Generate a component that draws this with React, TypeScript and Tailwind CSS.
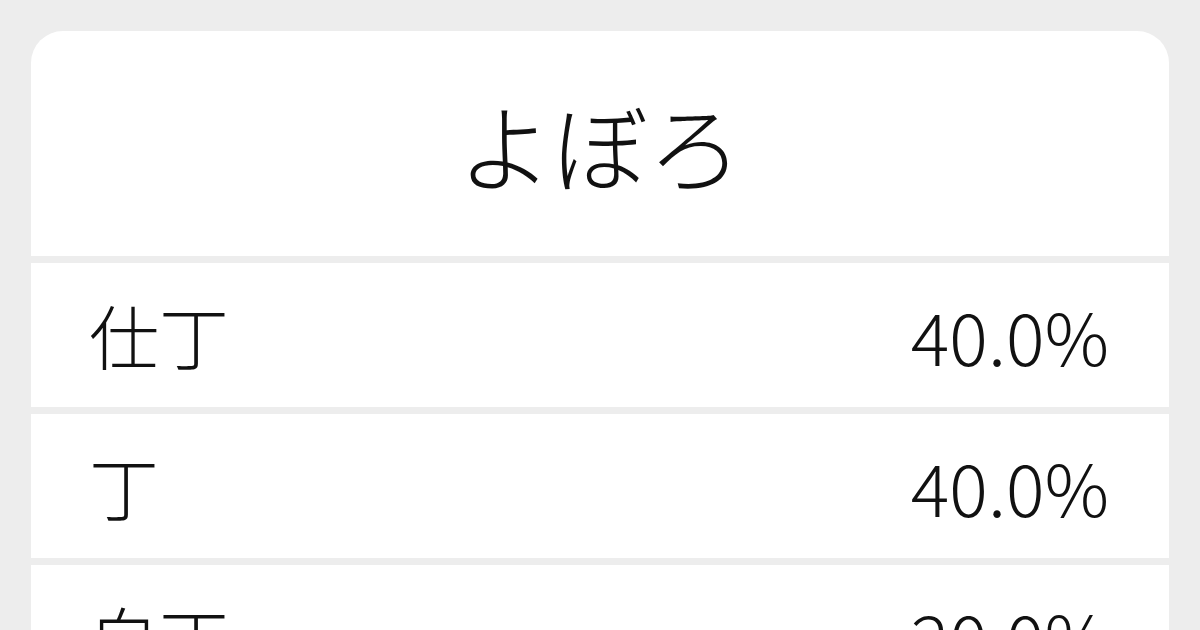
import React from 'react';

const rows = [
  { word: '仕丁', pct: '40.0%' },
  { word: '丁', pct: '40.0%' },
  { word: '白丁', pct: '20.0%' },
];

const App: React.FC = () => {
  return (
    <div
      className="w-[1200px] h-[630px] overflow-hidden bg-[#ededed] pt-[31px] px-[31px] text-[#111111]"
      style={{ fontFamily: '"Noto Sans CJK JP", "Noto Sans", sans-serif' }}
    >
      <div className="flex flex-col gap-[7px]">
        {/* Title */}
        <div className="h-[225px] bg-white rounded-t-[32px] flex items-center justify-center">
          <h1 className="text-[95px] font-light leading-none">よぼろ</h1>
        </div>

        {rows.map((r) => (
          <div key={r.word} className="h-[144px] bg-white flex items-center justify-between pl-[58px] pr-[60px]">
            <span className="text-[70px] font-light leading-none">{r.word}</span>
            <span className="text-[72px] font-light leading-none">{r.pct}</span>
          </div>
        ))}
      </div>
    </div>
  );
};

export default App;
